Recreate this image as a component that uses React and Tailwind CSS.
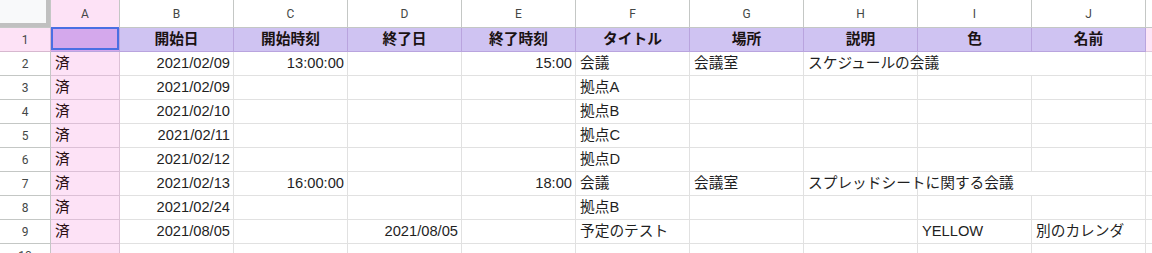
import React from 'react';

const COLS = ['A', 'B', 'C', 'D', 'E', 'F', 'G', 'H', 'I', 'J'];
const HEAD = ['', '開始日', '開始時刻', '終了日', '終了時刻', 'タイトル', '場所', '説明', '色', '名前'];

// right-aligned columns hold dates / times
const RIGHT = { B: true, C: true, D: true, E: true };

const ROWS = [
    { A: '済', B: '2021/02/09', C: '13:00:00', E: '15:00', F: '会議', G: '会議室', H: 'スケジュールの会議' },
    { A: '済', B: '2021/02/09', F: '拠点A' },
    { A: '済', B: '2021/02/10', F: '拠点B' },
    { A: '済', B: '2021/02/11', F: '拠点C' },
    { A: '済', B: '2021/02/12', F: '拠点D' },
    { A: '済', B: '2021/02/13', C: '16:00:00', E: '18:00', F: '会議', G: '会議室', H: 'スプレッドシートに関する会議' },
    { A: '済', B: '2021/02/24', F: '拠点B' },
    { A: '済', B: '2021/08/05', D: '2021/08/05', F: '予定のテスト', I: 'YELLOW', J: '別のカレンダ' },
    {},
];

export default function App() {
    return (
        <div
            className="w-[1152px] h-[253px] overflow-hidden bg-white text-[14.7px] text-[#1f1f1f]"
            style={{ fontFamily: '"Liberation Sans", "Noto Sans CJK JP", sans-serif' }}
        >
            <div className="grid grid-cols-[51px_69px_repeat(9,114px)_1fr] grid-rows-[28px_repeat(10,24px)]">
                {/* column header row */}
                <div className="bg-white border-r border-b border-[#c4c7c5]">
                    <div className="w-[50px] h-[27px] border-r-4 border-b-4 border-[#c0c0c0] bg-[#f8f9fa]" />
                </div>
                {COLS.map((c) => (
                    <div
                        key={c}
                        className={`flex items-center justify-center border-r border-b border-[#c4c7c5] text-[12px] text-[#444746] ${c === 'A' ? 'bg-[#fde2f6]' : 'bg-white'}`}
                        style={{ fontFamily: 'Roboto, sans-serif' }}
                    >
                        {c}
                    </div>
                ))}
                <div className="border-b border-[#c4c7c5] bg-white" />

                {/* row 1: headers */}
                <div
                    className="flex items-center justify-center border-r border-b border-[#d7b8cf] bg-[#fde2f6] text-[12px] text-[#444746]"
                    style={{ fontFamily: 'Roboto, sans-serif' }}
                >
                    1
                </div>
                {HEAD.map((h, i) =>
                    i === 0 ? (
                        <div key="a1" className="border-r border-b border-[#b9a4de] bg-[#d4a8ec]">
                            <div className="w-full h-full border-2 border-[#4a6fe3] -mt-px" />
                        </div>
                    ) : (
                        <div
                            key={h}
                            className="flex items-center justify-center border-r border-b border-[#b9a4de] bg-[#cfc3f2] font-bold text-[#1a1212]"
                        >
                            {h}
                        </div>
                    )
                )}
                <div className="border-b border-[#e0c8db] bg-[#fde6f7]" />

                {/* data rows */}
                {ROWS.map((r, ri) => (
                    <React.Fragment key={ri}>
                        <div
                            className="flex items-center justify-center border-r border-b border-[#c4c7c5] bg-white text-[12px] text-[#444746]"
                            style={{ fontFamily: 'Roboto, sans-serif' }}
                        >
                            {ri + 2}
                        </div>
                        {COLS.map((c) => (
                            <div
                                key={c}
                                className={`flex items-center overflow-visible whitespace-nowrap border-b ${c === 'A' ? 'bg-[#fde2f6] border-r border-[#dcc0d6]' : 'border-[#e1e1e1]'} ${r[c] || c === 'A' || !(r.H && (c === 'I')) ? 'border-r' : ''} ${c !== 'A' ? 'border-[#e1e1e1]' : ''} ${RIGHT[c] ? 'justify-end pr-[3px]' : 'pl-[4px]'}`}
                            >
                                <span className={c === 'A' ? 'text-[#2a0f12]' : ''}>{r[c] || ''}</span>
                            </div>
                        ))}
                        <div className="border-b border-[#e1e1e1] bg-white" />
                    </React.Fragment>
                ))}
            </div>
        </div>
    );
}
